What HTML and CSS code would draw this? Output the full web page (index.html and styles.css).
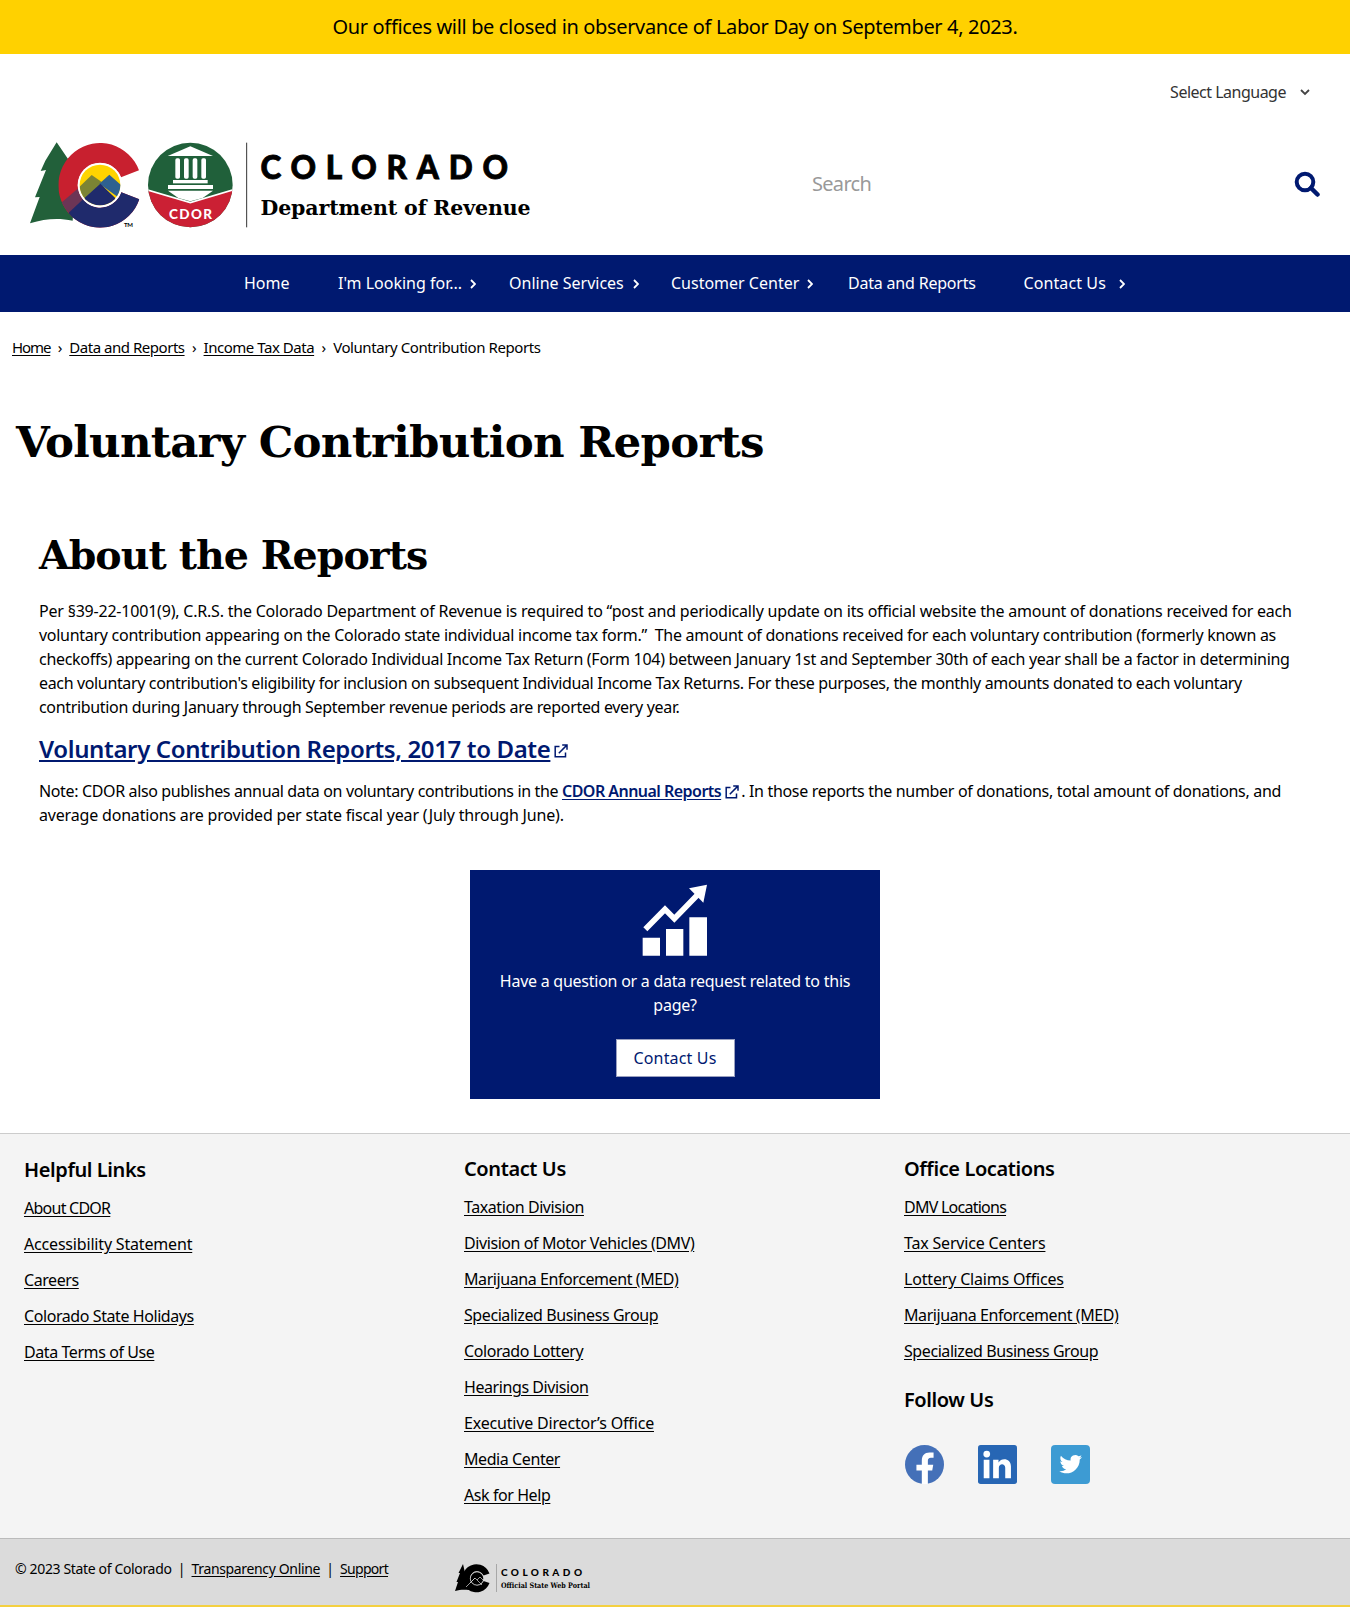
FILE: index.html
```html
<!DOCTYPE html>
<html lang="en">
<head>
<meta charset="utf-8">
<title>Voluntary Contribution Reports | Department of Revenue</title>
<link rel="stylesheet" href="styles.css">
</head>
<body>
<svg class="defs" aria-hidden="true">
  <symbol id="chev" viewBox="0 0 6 10"><path d="M1 1l4 4-4 4" fill="none" stroke="currentColor" stroke-width="1.8"/></symbol>
  <symbol id="ext" viewBox="0 0 14 14"><path d="M5.5 2.5H1.2v10.300h10.300V8.500M4.800 9.200L12.600 1.400M8.200 1h4.800v4.800" fill="none" stroke="currentColor" stroke-width="1.500"/></symbol>
</svg>

<div class="banner"><span>Our offices will be closed in observance of Labor Day on September 4, 2023.</span></div>

<header class="header">
  <div class="language"><span>Select Language</span>
    <svg width="10" height="7" viewBox="0 0 10 7"><path d="M1 1l4 4 4-4" fill="none" stroke="#444" stroke-width="1.800"/></svg>
  </div>
  <div class="masthead">
    <svg class="logo" viewBox="0 0 520 110" role="img" aria-label="Colorado Department of Revenue">
      <defs>
        <clipPath id="cShape"><path d="M357 121A125 127 0 1 0 358 208L304 187A67 67 0 1 1 303 142Z"/></clipPath>
        <clipPath id="disc"><circle cx="240" cy="165" r="61"/></clipPath>
        <clipPath id="seal"><circle cx="511" cy="165" r="127"/></clipPath>
      </defs>
      <g transform="scale(.33333)">
        <path d="M110 37L76 92l-14 31 16-3-33 82 14-1-29 79c45-14 85-17 128-8l10-150z" fill="#22603a"/>
        <g clip-path="url(#cShape)">
          <path fill="#c8202f" d="M100 30h270v270H100z"/>
          <path fill="#6c3556" d="M122 220l60-51 10 40-46 40z"/>
          <path fill="#1f2a6c" d="M146 248l45-42 30 10 90-40h60v120H150z"/>
        </g>
        <circle cx="240" cy="165" r="67" fill="#fff"/>
        <g clip-path="url(#disc)">
          <path fill="#ffd400" d="M170 90h140v140H170z"/>
          <path fill="#7c8434" d="M215 135l-50 48v60l90-80z"/>
          <path fill="#2e6190" d="M268 134l-30 27 70 50v-42z"/>
          <path fill="#1f2a6c" d="M241 161l-65 59v20h130v-30l-18-4z"/>
        </g>
        <g clip-path="url(#seal)">
          <path fill="#20603a" d="M380 30h260v270H380z"/>
          <path fill="#cb2034" d="M380 180l131 38 131-38v120H380z"/>
          <path d="M380 179l131 39 131-39" fill="none" stroke="#fff" stroke-width="5"/>
        </g>
        <g fill="#fff">
          <path d="M511 49l68 29H443z"/>
          <rect x="466" y="85" width="14" height="61" rx="5"/><rect x="492" y="85" width="14" height="61" rx="5"/>
          <rect x="518" y="85" width="14" height="61" rx="5"/><rect x="544" y="85" width="14" height="61" rx="5"/>
          <rect x="459" y="150" width="104" height="10"/><rect x="444" y="165" width="135" height="12"/>
          <path d="M444 182h135l-31 22-37 10-36-10z"/>
        </g>
        <path d="M680 38v254" stroke="#333" stroke-width="3"/>
      </g>
      <text class="sans heavy" x="149" y="88.500" font-size="13.500" textLength="43" fill="#fff">CDOR</text>
      <text class="sans" x="104" y="97" font-size="6" textLength="9">TM</text>
      <text class="sans heavy bigname" x="240.500" y="48.500" font-size="31.500" textLength="247.500">COLORADO</text>
      <text class="slab" x="240.500" y="85" font-size="20.500" textLength="270">Department of Revenue</text>
    </svg>
    <form class="search"><span>Search</span>
      <svg width="26" height="26" viewBox="0 0 26 26"><g fill="none" stroke="#001970"><circle cx="11" cy="11" r="8.300" stroke-width="4"/><path d="M17 17l6.500 6.500" stroke-width="4.500" stroke-linecap="round"/></g></svg>
    </form>
  </div>
</header>

<nav class="nav">
  <a class="n1">Home</a>
  <a class="n2">I'm Looking for... <svg><use href="#chev"/></svg></a>
  <a class="n3">Online Services <svg><use href="#chev"/></svg></a>
  <a class="n4">Customer Center <svg><use href="#chev"/></svg></a>
  <a class="n5">Data and Reports</a>
  <a class="n6">Contact Us <svg><use href="#chev"/></svg></a>
</nav>

<div class="crumbs"><u class="c1">Home</u><i>›</i><u class="c2">Data and Reports</u><i>›</i><u class="c3">Income Tax Data</u><i>›</i><span>Voluntary Contribution Reports</span></div>

<main>
  <h1>Voluntary Contribution Reports</h1>
  <section class="about">
    <h2>About the Reports</h2>
    <p>
      <span class="line p1">Per §39-22-1001(9), C.R.S. the Colorado Department of Revenue is required to “post and periodically update on its official website the amount of donations received for each</span>
      <span class="line p2">voluntary contribution appearing on the Colorado state individual income tax form.”&nbsp; The amount of donations received for each voluntary contribution (formerly known as</span>
      <span class="line p3">checkoffs) appearing on the current Colorado Individual Income Tax Return (Form 104) between January 1st and September 30th of each year shall be a factor in determining</span>
      <span class="line p4">each voluntary contribution's eligibility for inclusion on subsequent Individual Income Tax Returns. For these purposes, the monthly amounts donated to each voluntary</span>
      <span class="line p5">contribution during January through September revenue periods are reported every year.</span>
    </p>
    <h3><a>Voluntary Contribution Reports, 2017 to Date</a><svg><use href="#ext"/></svg></h3>
    <p>
      <span class="line q1"><span class="q1a">Note: CDOR also publishes annual data on voluntary contributions in the </span><a>CDOR Annual Reports</a><svg><use href="#ext"/></svg><span class="q1b">. In those reports the number of donations, total amount of donations, and</span></span>
      <span class="line q2">average donations are provided per state fiscal year (July through June).</span>
    </p>
  </section>
  <aside class="card">
    <svg width="66" height="73" viewBox="547 70 198 219" fill="#fff"><path d="M549 231h52v54h-52zM619 205h52v80h-52zM689 170h53v115h-53z"/><path d="M557 206l59-60 28 28 72-74" fill="none" stroke="#fff" stroke-width="17"/><path d="M742 72l-11 54-43-43z"/></svg>
    <p>Have a question or a data request related to this page?</p>
    <a class="button">Contact Us</a>
  </aside>
</main>

<footer class="footer">
  <div class="first">
    <h4>Helpful Links</h4>
    <ul><li class="tight">About CDOR</li><li class="loose">Accessibility Statement</li><li>Careers</li><li>Colorado State Holidays</li><li>Data Terms of Use</li></ul>
  </div>
  <div>
    <h4>Contact Us</h4>
    <ul><li>Taxation Division</li><li>Division of Motor Vehicles (DMV)</li><li>Marijuana Enforcement (MED)</li><li>Specialized Business Group</li><li>Colorado Lottery</li><li>Hearings Division</li><li class="loose">Executive Director’s Office</li><li>Media Center</li><li>Ask for Help</li></ul>
  </div>
  <div>
    <h4>Office Locations</h4>
    <ul><li class="tight">DMV Locations</li><li class="loose">Tax Service Centers</li><li class="loose">Lottery Claims Offices</li><li>Marijuana Enforcement (MED)</li><li>Specialized Business Group</li></ul>
    <h4 class="follow">Follow Us</h4>
    <div class="social">
      <svg viewBox="0 0 116 116"><circle cx="58" cy="58" r="58" fill="#4470b8"/><path fill="#fff" d="M50 116V76H34V59h16V46c0-15 8-24 23-24h12v16h-8c-7 0-9 4-9 9v12h16l-3 17H68v40z"/></svg>
      <svg viewBox="0 0 116 116"><rect width="116" height="116" rx="8" fill="#2766b4"/><g fill="#fff"><circle cx="26" cy="27" r="10"/><path d="M17 44h17v55H17zM45 44h16v8c8-15 37-14 37 12v35H81V68c0-14-19-14-19 0v31H45z"/></g></svg>
      <svg viewBox="0 0 116 116"><rect width="116" height="116" rx="12" fill="#3d9bd3"/><path fill="#fff" transform="translate(23 21) scale(2.950)" d="M23.600 5c-.8.400-1.700.6-2.700.8 1-.6 1.700-1.500 2-2.600-.9.500-1.900.9-3 1.100A4.700 4.700 0 0 0 12 8.600C8 8.400 4.500 6.500 2.200 3.600c-1.200 2.100-.6 4.900 1.500 6.300-.8 0-1.500-.2-2.100-.6 0 2.200 1.500 4.200 3.700 4.700-.7.200-1.400.2-2.100.1.600 1.900 2.300 3.200 4.400 3.300A9.500 9.500 0 0 1 .6 19.300C9.500 25 21.200 18.600 21.200 7.400c1-.700 1.800-1.500 2.400-2.400z"/></svg>
    </div>
  </div>
</footer>

<div class="legal">
  <div class="legal-text"><span class="g1">© 2023 State of Colorado</span><b>|</b><u class="g2">Transparency Online</u><b>|</b><u class="g3">Support</u></div>
  <svg class="portal" viewBox="0 0 150 36" role="img" aria-label="Colorado Official State Web Portal">
    <path d="M8 1L3.500 10l1.500 0-3.500 9h1.500L0 28c5-1.500 9-1.500 14-1z"/>
    <path d="M34.500 10.500A14 14 0 1 0 34.500 20L28.500 18A7 7 0 1 1 28.500 12.500Z"/>
    <circle cx="22" cy="15.500" r="6.500"/>
    <g fill="none" stroke="#dbdbdb" stroke-width=".7"><circle cx="22" cy="15.500" r="6.700"/><path d="M11 24l9-9 2 2 3-3 4 4M15 20l5-5M22 17l5 5"/></g>
    <path d="M41.500 1v28" stroke="#999" stroke-width=".8"/>
    <text class="sans heavy" x="46" y="12.500" font-size="10" textLength="81">COLORADO</text>
    <text class="slab" x="46" y="24.500" font-size="7.500" textLength="89" lengthAdjust="spacingAndGlyphs">Official State Web Portal</text>
  </svg>
</div>
</body>
</html>
```
FILE: styles.css
```css
* { box-sizing: border-box; }
body { margin: 0; background: #fff; color: #000; font: 16px/24px "Noto Sans", sans-serif; }
.defs { display: none; }
h1, h2, h3, h4, p, ul { margin: 0; padding: 0; }
u { text-underline-offset: 2px; }

.banner { height: 54px; background: #ffd100; display: flex; align-items: center; justify-content: center; font-size: 20px; letter-spacing: -.35px; }

.header { height: 201px; }
.language { height: 76px; padding-right: 40px; display: flex; align-items: center; justify-content: flex-end; gap: 14px; color: #333; letter-spacing: -.5px; }
.masthead { display: flex; height: 110px; }
.logo { width: 520px; height: 110px; margin-left: 20px; }
.sans { font-family: Lato, sans-serif; font-weight: 700; }
.heavy { font-weight: 900; }
.bigname { stroke: #000; stroke-width: .8px; }
.slab { font-family: "DejaVu Serif", serif; font-weight: 700; }
.search { flex: 1; height: 108px; margin-left: 272px; padding-right: 30px; display: flex; align-items: center; justify-content: space-between; color: #999; font-size: 20px; letter-spacing: -.7px; }

.nav { height: 57px; background: #001970; color: #fff; padding: 0 0 2px 244px; display: grid; grid-template-columns: 94px 171px 162px 177px 175.5px 110px; align-items: center; }
.nav a { display: flex; align-items: center; gap: 9px; white-space: nowrap; }
.nav svg { width: 6px; height: 10px; margin-top: 3px; }
.nav .n2, .nav .n4 { gap: 8px; }
.n5 { letter-spacing: -.2px; }
.nav .n6 { gap: 13px; letter-spacing: .1px; }

.crumbs { height: 71px; padding: 0 0 2px 12px; display: flex; align-items: center; font-size: 15px; letter-spacing: -.42px; }
.crumbs i { font-style: normal; width: 19px; text-align: center; }
.crumbs .c1 { letter-spacing: -1.1px; }
.crumbs .c2, .crumbs .c3 { letter-spacing: -.47px; }

h1 { margin-left: 16px; height: 128px; white-space: nowrap; font: 700 43.5px/118px "DejaVu Serif", serif; letter-spacing: -.75px; }
.about { padding-left: 39px; white-space: nowrap; }
h2 { font: 700 39.5px/88px "DejaVu Serif", serif; letter-spacing: -.95px; }
.line { display: block; height: 24px; }
.p1 { letter-spacing: -.207px; }
.p2 { letter-spacing: -.28px; }
.p3 { letter-spacing: -.295px; }
.p4 { letter-spacing: -.35px; }
.p5 { letter-spacing: -.33px; }
.q1a { letter-spacing: -.36px; }
.q1b { letter-spacing: -.32px; }
.q2 { letter-spacing: -.18px; }
h3 { font-size: 24px; font-weight: 600; line-height: 36px; letter-spacing: -.37px; margin: 12px 0 12px; display: flex; align-items: center; gap: 4px; }
.about a { color: #001970; text-decoration: underline; text-underline-offset: 2px; }
.about svg { width: 14px; height: 14px; color: #001970; margin-top: 3px; }
.q1 { display: flex; align-items: center; white-space: pre; }
.q1 a { font-weight: 600; letter-spacing: -.53px; }
.q1 svg { margin: 2px 2px 0 4px; }

.card { width: 410px; height: 229px; margin: 43px auto 34px; background: #001970; color: #fff; display: flex; flex-direction: column; align-items: center; padding-top: 14px; text-align: center; }
.card p { width: 370px; margin-top: 12px; letter-spacing: -.25px; }
.button { margin-top: 22px; width: 119px; height: 38px; background: #fff; border: 1px solid #9aa0c0; color: #001970; line-height: 36px; letter-spacing: .15px; }

.footer { height: 405px; background: #f4f4f4; border-top: 1px solid #ccc; padding: 21px 24px 0; display: grid; grid-template-columns: 440px 440px 1fr; }
.first { padding-top: 1px; }
h4 { font-size: 20px; font-weight: 600; line-height: 28px; letter-spacing: -.4px; }
.footer ul { list-style: none; margin-top: 12px; }
.footer li { height: 36px; line-height: 24px; text-decoration: underline; text-underline-offset: 2px; letter-spacing: -.42px; }
.footer .tight { letter-spacing: -.75px; }
.footer .loose { letter-spacing: -.18px; }
.follow { margin-top: 11px; }
.social { display: flex; gap: 34px; margin-top: 31px; padding-left: 1px; }
.social svg { width: 39px; height: 39px; }

.legal { height: 69px; background: #dbdbdb; border-top: 1px solid #bbb; border-bottom: 2px solid #f4d040; padding-left: 15px; display: flex; align-items: center; font-size: 14px; letter-spacing: -.35px; }
.legal-text { display: flex; margin-bottom: 7px; }
.legal b { font-weight: 400; width: 20px; text-align: center; }
.g3 { letter-spacing: -.7px; }
.portal { width: 150px; height: 36px; margin: 18px 0 0 67px; letter-spacing: 0; }
```
